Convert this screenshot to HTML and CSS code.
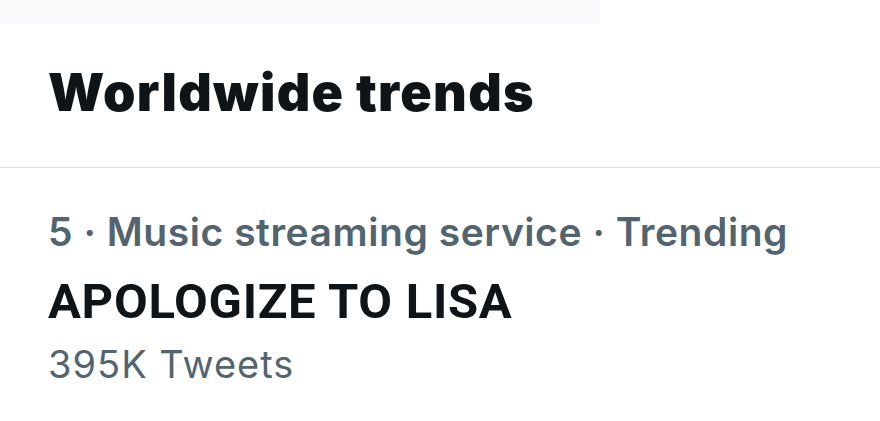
FILE: index.html
```html
<!DOCTYPE html>
<html>
<head>
<meta charset="utf-8">
<link rel="stylesheet" href="styles.css">
</head>
<body>
<div class="topstrip"></div>
<header class="head">
  <h1 class="title">Worldwide trends</h1>
</header>
<section class="trend">
  <div class="meta">5 · Music streaming service · Trending</div>
  <div class="name">APOLOGIZE TO LISA</div>
  <div class="count">395K Tweets</div>
</section>
</body>
</html>
```
FILE: styles.css
```css
html, body {
  margin: 0;
  padding: 0;
  background: #ffffff;
  width: 880px;
  height: 421px;
  overflow: hidden;
}
body {
  font-family: Inter, Roboto, "Liberation Sans", sans-serif;
}
.topstrip {
  width: 600px;
  height: 23px;
  background: #fafafc;
}
.head {
  padding: 44px 0 48px 48px;
  border-bottom: 1px solid #dedede;
}
.title {
  margin: 0;
  font-size: 52px;
  line-height: 52px;
  font-weight: 900;
  letter-spacing: 1.3px;
  color: #0f1419;
}
.trend {
  padding: 45px 48px 0 48px;
}
.meta {
  font-size: 39px;
  line-height: 38px;
  font-weight: 600;
  letter-spacing: 0.55px;
  color: #536471;
}
.name {
  margin-top: 26px;
  font-family: Roboto, "Liberation Sans", sans-serif;
  font-size: 49px;
  line-height: 49px;
  font-weight: 700;
  letter-spacing: 0.7px;
  color: #0f1419;
}
.count {
  margin-top: 19px;
  font-size: 38px;
  line-height: 38px;
  font-weight: 400;
  letter-spacing: 1px;
  color: #536471;
}
```
